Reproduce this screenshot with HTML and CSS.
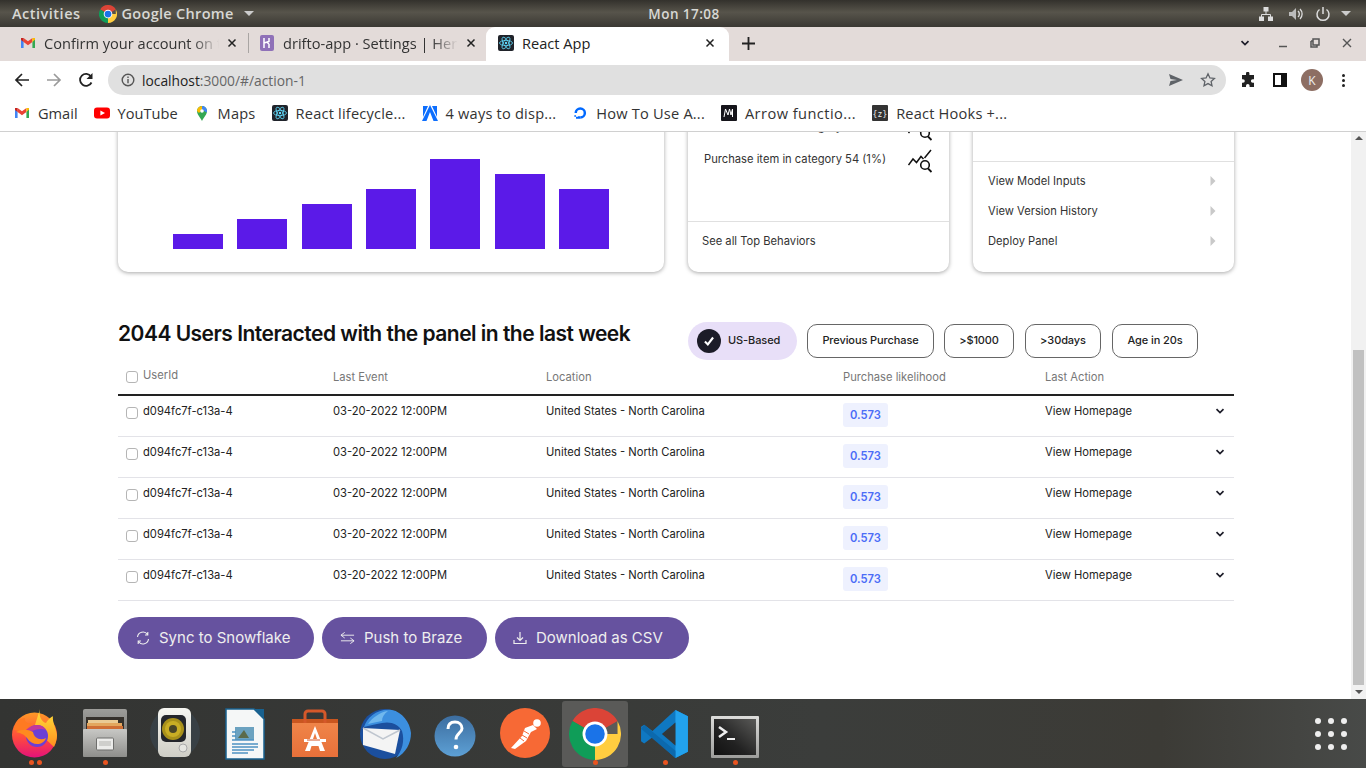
FILE: index.html
```html
<!DOCTYPE html>
<html lang="en">
<head>
<meta charset="utf-8">
<title>React App</title>
<link rel="stylesheet" href="styles.css">
</head>
<body>
<svg class="defs" width="0" height="0" aria-hidden="true">
  <defs>
    <symbol id="react" viewBox="0 0 16 16"><rect width="16" height="16" rx="2" fill="#20232a"/><g fill="none" stroke="#61dafb" stroke-width=".8"><ellipse cx="8" cy="8" rx="6.5" ry="2.6"/><ellipse cx="8" cy="8" rx="6.5" ry="2.6" transform="rotate(60 8 8)"/><ellipse cx="8" cy="8" rx="6.5" ry="2.6" transform="rotate(120 8 8)"/></g><circle cx="8" cy="8" r="1.2" fill="#61dafb"/></symbol>
    <symbol id="gmail" viewBox="0 0 16 16"><path d="M1 3v10h2.6V7z" fill="#4285f4"/><path d="M12.4 7v6H15V3z" fill="#34a853"/><path d="M3.6 3v4L8 10.2V6.2z" fill="#ea4335"/><path d="M12.4 3v4L8 10.2V6.2z" fill="#ea4335"/><path d="M12.4 3H15v1.5L12.4 7z" fill="#fbbc04"/><path d="M1 3h2.6v4L1 5z" fill="#c5221f"/></symbol>
    <symbol id="chrome" viewBox="0 0 48 48"><path d="M24 24L3.2 12A24 24 0 0 1 44.8 12z" fill="#db4437"/><path d="M24 24L3.2 12A24 24 0 0 0 24 48z" fill="#0f9d58"/><path d="M24 24H44.8V12A24 24 0 0 1 24 48z" fill="#ffcd40"/><circle cx="24" cy="24" r="11.5" fill="#fff"/><circle cx="24" cy="24" r="9" fill="#1a73e8"/></symbol>
    <symbol id="chev" viewBox="0 0 10 10"><path d="M1.5 3.2L5 6.6l3.5-3.4" fill="none" stroke="#1c1c28" stroke-width="1.7"/></symbol>
    <symbol id="tri" viewBox="0 0 6 12"><path d="M0.5 1l5 5-5 5z" fill="#c9c9c9"/></symbol>
    <symbol id="trend" viewBox="0 0 26 24"><path d="M0.5 16L5 10l3.500 3.500L13 7.500 15.500 10M16.500 9L23 1" fill="none" stroke="#111" stroke-width="1.500"/><circle cx="17" cy="16" r="4.300" fill="none" stroke="#111" stroke-width="1.600"/><path d="M20 19.500l3.500 3.500" stroke="#111" stroke-width="1.800"/></symbol>
    <symbol id="close" viewBox="0 0 10 10"><path d="M1.5 1.5l7 7M8.5 1.5l-7 7" stroke="#222" stroke-width="1.5"/></symbol>
  </defs>
</svg>

<header class="topbar">
  <div class="top-left">
    <span class="activities">Activities</span>
    <span class="top-app"><svg class="i18"><use href="#chrome"/></svg>Google Chrome<i class="caret"></i></span>
  </div>
  <div class="clock">Mon 17:08</div>
  <div class="top-right">
    <svg class="i16 net" viewBox="0 0 16 16"><path d="M5.500 1h5v4.500h-5zM1 10.500h5V15H1zM10 10.500h5V15h-5z" fill="#ddd"/><path d="M8 5v3.500M3.500 11V8.500h9V11" fill="none" stroke="#ddd"/></svg>
    <svg class="i16" viewBox="0 0 16 16"><path d="M1 6h3l4-4v12l-4-4H1z" fill="#bbb"/><path d="M10 5a4 4 0 0 1 0 6M12 3a7 7 0 0 1 0 10" fill="none" stroke="#ddd" stroke-width="1.3"/></svg>
    <svg class="i16" viewBox="0 0 16 16"><path d="M8 1v7M4.5 3.5a6 6 0 1 0 7 0" fill="none" stroke="#ddd" stroke-width="1.5"/></svg>
    <i class="caret"></i>
  </div>
</header>

<div class="tabstrip">
  <div class="tab tab-one"><svg class="i16"><use href="#gmail"/></svg><span class="tab-title">Confirm your account on t</span><svg class="i10"><use href="#close"/></svg></div>
  <div class="tab tab-two"><svg class="i16" viewBox="0 0 16 16"><rect x="1" width="14" height="16" rx="2" fill="#8f71b8"/><path d="M5 3v10M5 8l5-1.5V3M10 9v4M10 9L7.5 7" fill="none" stroke="#fff" stroke-width="1.5"/></svg><span class="tab-title">drifto-app · Settings | Hero</span><svg class="i10"><use href="#close"/></svg></div>
  <div class="tab tab-active"><svg class="i16"><use href="#react"/></svg><span class="tab-title">React App</span><svg class="i10"><use href="#close"/></svg></div>
  <svg class="new-tab" viewBox="0 0 12 12"><path d="M6 0v12M0 6h12" stroke="#222" stroke-width="1.7"/></svg>
  <div class="win-controls">
    <svg class="i10 wc-list"><use href="#chev"/></svg>
    <svg class="i10" viewBox="0 0 10 10"><path d="M1 8.5h8" stroke="#555" stroke-width="1.5"/></svg>
    <svg class="i10" viewBox="0 0 10 10"><path d="M3 1h6v6H3zM1 3h2M1 3v6h6V7" fill="none" stroke="#555" stroke-width="1.5"/></svg>
    <svg class="i10" viewBox="0 0 10 10"><path d="M1 1l8 8M9 1l-8 8" stroke="#555" stroke-width="1.4"/></svg>
  </div>
</div>

<nav class="toolbar">
  <svg class="i16 tool" viewBox="0 0 16 16"><path d="M15 8H2M8 2L2 8l6 6" fill="none" stroke="#222" stroke-width="1.7"/></svg>
  <svg class="i16 tool" viewBox="0 0 16 16"><path d="M1 8h13M8 2l6 6-6 6" fill="none" stroke="#9a9a9a" stroke-width="1.7"/></svg>
  <svg class="i16 tool" viewBox="0 0 16 16"><path d="M13.5 10.5A6 6 0 1 1 13 4.5" fill="none" stroke="#222" stroke-width="1.8"/><path d="M14.5 1v6h-6z" fill="#222"/></svg>
  <div class="omnibox">
    <svg class="i14" viewBox="0 0 14 14"><circle cx="7" cy="7" r="5.8" fill="none" stroke="#555" stroke-width="1.4"/><path d="M7 6v4.2M7 3.6v1.3" stroke="#555" stroke-width="1.4"/></svg>
    <span class="url"><b>localhost</b>:3000/#/action-1</span>
    <svg class="i16 send" viewBox="0 0 16 16"><path d="M1 2l14 6-14 6 1.5-5L9 8 2.5 7z" fill="#5f6368"/></svg>
    <svg class="i16" viewBox="0 0 16 16"><path d="M8 1.8l1.9 4.1 4.5.5-3.3 3 .9 4.4L8 11.6l-4 2.2.9-4.4-3.3-3 4.5-.5z" fill="none" stroke="#5f6368" stroke-width="1.3"/></svg>
  </div>
  <svg class="i16 ext" viewBox="0 0 16 16"><path d="M6 1.5a1.7 1.7 0 0 1 3.4 0V3H14v4.2h-1.3a1.8 1.8 0 0 0 0 3.6H14V15H9.6v-1.2a1.8 1.8 0 0 0-3.6 0V15H2v-4.2h1a1.8 1.8 0 0 0 0-3.6H2V3h4z" fill="#222"/></svg>
  <svg class="i16 side" viewBox="0 0 16 16"><path d="M2 2h12v12H2z" fill="none" stroke="#111" stroke-width="2"/><path d="M9 2h5v12H9z" fill="#111"/></svg>
  <span class="avatar">K</span>
  <span class="kebab"><i></i><i></i><i></i></span>
</nav>

<div class="bookmarks">
  <span class="bm bm-tight"><svg class="i16"><use href="#gmail"/></svg>Gmail</span>
  <span class="bm bm-tight"><svg class="i16" viewBox="0 0 16 16"><rect y="2.5" width="16" height="11" rx="3" fill="#f00"/><path d="M6.4 5.5v5L11 8z" fill="#fff"/></svg>YouTube</span>
  <span class="bm"><svg class="i16" viewBox="0 0 16 16"><path d="M8 16C6 12 3 9.5 3 6a5 5 0 0 1 10 0c0 3.500-3 6-5 10z" fill="#34a853"/><path d="M4.500 2.500A5 5 0 0 1 8 1v3.500L5 8 3 6a5 5 0 0 1 1.500-3.500z" fill="#fbbc04"/><path d="M8 1a5 5 0 0 1 5 5c0 .5 0 1-.3 1.500L8 4.500z" fill="#4285f4"/><circle cx="8" cy="6" r="1.800" fill="#fff"/></svg>Maps</span>
  <span class="bm"><svg class="i16"><use href="#react"/></svg>React lifecycle...</span>
  <span class="bm"><svg class="i16" viewBox="0 0 16 16"><path d="M8 0l8 16h-4.500L8 7 4.500 16H0z" fill="#0d6efd"/><path d="M0 0h6.500L0 14zM16 0H9.500L16 14z" fill="#fff"/><path d="M1 1h5L1 12zM15 1h-5l5 11z" fill="#0d6efd"/></svg>4 ways to disp...</span>
  <span class="bm"><svg class="i16" viewBox="0 0 16 16"><path d="M2.500 8a5.800 5.800 0 1 1 5.800 5.800V11.300A3.300 3.300 0 1 0 5 8z" fill="#0069ff"/><path d="M8.300 11.300v2.500H6v-2.500zM6 13.800H4v-2h2zM4 11.800H2.300v-1.500H4z" fill="#0069ff"/></svg>How To Use A...</span>
  <span class="bm bm-wide"><svg class="i16" viewBox="0 0 16 16"><rect width="16" height="16" rx="1" fill="#15141a"/><path d="M3 12l1.500-8L7 10l1.500-6L10 10l1.500-6v8" fill="none" stroke="#fff" stroke-width="1"/></svg>Arrow functio...</span>
  <span class="bm"><svg class="i16" viewBox="0 0 16 16"><rect width="16" height="16" rx="1" fill="#333"/><text x="8" y="11.500" class="zed">{z}</text></svg>React Hooks +...</span>
</div>

<div class="viewport">
  <main class="page">
    <section class="cards">
      <article class="card card-chart">
        <div class="bars">
          <div class="bar" style="height:15px"></div>
          <div class="bar" style="height:30px"></div>
          <div class="bar" style="height:45px"></div>
          <div class="bar" style="height:60px"></div>
          <div class="bar" style="height:90px"></div>
          <div class="bar" style="height:75px"></div>
          <div class="bar" style="height:60px"></div>
        </div>
      </article>
      <article class="card card-behaviors">
        <div class="behaviors">
          <div class="behavior"><span>Purchase item in category 12 (2%)</span><svg class="trend"><use href="#trend"/></svg></div>
          <div class="behavior"><span>Purchase item in category 54 (1%)</span><svg class="trend"><use href="#trend"/></svg></div>
        </div>
        <div class="see-all">See all Top Behaviors</div>
      </article>
      <article class="card card-links">
        <div class="links-top"></div>
        <ul class="links">
          <li>View Model Inputs<svg class="tri"><use href="#tri"/></svg></li>
          <li>View Version History<svg class="tri"><use href="#tri"/></svg></li>
          <li>Deploy Panel<svg class="tri"><use href="#tri"/></svg></li>
        </ul>
      </article>
    </section>

    <section class="heading-row">
      <h2>2044 Users Interacted with the panel in the last week</h2>
      <div class="filters">
        <span class="chip-on"><span class="tick"><svg viewBox="0 0 12 12"><path d="M2.500 6.500l2.500 2.500 4.500-6" fill="none" stroke="#fff" stroke-width="1.800"/></svg></span>US-Based</span>
        <span class="chip chip-a">Previous Purchase</span>
        <span class="chip chip-b">&gt;$1000</span>
        <span class="chip chip-c">&gt;30days</span>
        <span class="chip chip-d">Age in 20s</span>
      </div>
    </section>

    <section class="table">
      <div class="thead">
        <div class="th th-id"><i class="box"></i><span>UserId</span></div>
        <div class="th">Last Event</div>
        <div class="th">Location</div>
        <div class="th">Purchase likelihood</div>
        <div class="th">Last Action</div>
      </div>
      <div class="tr"><div class="td td-id"><i class="box"></i>d094fc7f-c13a-4</div><div class="td">03-20-2022 12:00PM</div><div class="td">United States - North Carolina</div><div class="td"><span class="score">0.573</span></div><div class="td td-action">View Homepage<svg class="i10"><use href="#chev"/></svg></div></div>
      <div class="tr"><div class="td td-id"><i class="box"></i>d094fc7f-c13a-4</div><div class="td">03-20-2022 12:00PM</div><div class="td">United States - North Carolina</div><div class="td"><span class="score">0.573</span></div><div class="td td-action">View Homepage<svg class="i10"><use href="#chev"/></svg></div></div>
      <div class="tr"><div class="td td-id"><i class="box"></i>d094fc7f-c13a-4</div><div class="td">03-20-2022 12:00PM</div><div class="td">United States - North Carolina</div><div class="td"><span class="score">0.573</span></div><div class="td td-action">View Homepage<svg class="i10"><use href="#chev"/></svg></div></div>
      <div class="tr"><div class="td td-id"><i class="box"></i>d094fc7f-c13a-4</div><div class="td">03-20-2022 12:00PM</div><div class="td">United States - North Carolina</div><div class="td"><span class="score">0.573</span></div><div class="td td-action">View Homepage<svg class="i10"><use href="#chev"/></svg></div></div>
      <div class="tr"><div class="td td-id"><i class="box"></i>d094fc7f-c13a-4</div><div class="td">03-20-2022 12:00PM</div><div class="td">United States - North Carolina</div><div class="td"><span class="score">0.573</span></div><div class="td td-action">View Homepage<svg class="i10"><use href="#chev"/></svg></div></div>
    </section>

    <section class="actions">
      <button class="btn btn-a"><svg class="i14" viewBox="0 0 14 14"><path d="M1.500 6A5.500 5.500 0 0 1 11.500 3.500M12.500 8A5.500 5.500 0 0 1 2.500 10.500M11.800 1v3H9M2.200 13v-3H5" fill="none" stroke="#eee" stroke-width="1.100"/></svg>Sync to Snowflake</button>
      <button class="btn btn-b"><svg class="i14 wide" viewBox="0 0 16 14"><path d="M1 4h14M5 1L1 4l4 3M15 10H1M11 7l4 3-4 3" fill="none" stroke="#eee" stroke-width="1"/></svg>Push to Braze</button>
      <button class="btn btn-c"><svg class="i14" viewBox="0 0 14 14"><path d="M7 1v8M4 6.500L7 9.500l3-3M1 9v3.500h12V9" fill="none" stroke="#eee" stroke-width="1.200"/></svg>Download as CSV</button>
    </section>
  </main>
  <aside class="scrollbar">
    <i class="arrow-up"></i>
    <div class="thumb"></div>
    <i class="arrow-down"></i>
  </aside>
</div>

<footer class="dock">
  <div class="app">
    <svg class="icon" viewBox="0 0 50 52">
      <defs>
        <linearGradient id="ff" x1="0" y1="0" x2="0" y2="1"><stop offset="0" stop-color="#ff9a26"/><stop offset=".55" stop-color="#ff4a3d"/><stop offset="1" stop-color="#e3127a"/></linearGradient>
        <linearGradient id="ffy" x1="0" y1="0" x2="0" y2="1"><stop offset="0" stop-color="#ffe23a"/><stop offset="1" stop-color="#ff8f1f"/></linearGradient>
      </defs>
      <circle cx="24.500" cy="27" r="22.500" fill="url(#ff)"/>
      <path d="M30 1c-2 7 2 13 6 14 3-5 6-6 7-7-1 6 3 12 4 19 0 4-1 8-3 12L24 20z" fill="url(#ffy)"/>
      <path d="M8 12c2-1 5-2 7-2-1 4 3 6 7 5l-8 9-10-2c0-4 2-7 4-10z" fill="#ff7a22"/>
      <circle cx="27" cy="28" r="11" fill="#6b3fd4"/>
      <path d="M27 17a11 11 0 0 1 9 5c-4-2-9-1-14 1l-6-1c3-3 7-5 11-5z" fill="#c2389c"/>
      <path d="M6 24c6-3 12-3 17 0 1 6 7 9 13 6-3 8-14 8-19 0-3-4-7-5-11-6z" fill="#ff8a1f"/>
    </svg>
    <div class="dots"><i></i><i></i></div>
  </div>
  <div class="app">
    <svg class="icon" viewBox="0 0 50 52">
      <defs>
        <linearGradient id="cab" x1="0" y1="0" x2="0" y2="1"><stop offset="0" stop-color="#c8c8c5"/><stop offset="1" stop-color="#8e8e8b"/></linearGradient>
        <linearGradient id="cabt" x1="0" y1="0" x2="0" y2="1"><stop offset="0" stop-color="#9d9d9a"/><stop offset="1" stop-color="#5e5e5b"/></linearGradient>
      </defs>
      <rect x="3" y="1" width="44" height="48" rx="2" fill="url(#cabt)"/>
      <rect x="6" y="9" width="38" height="13" fill="#35312c"/>
      <path d="M8 12h30v3H8z" fill="#eacb94"/><path d="M7 15h35v3H7z" fill="#e3a75e"/><path d="M7 18h36v3H7z" fill="#cf6f35"/>
      <rect x="3" y="21" width="44" height="28" rx="1" fill="url(#cab)"/>
      <rect x="16.500" y="30" width="17" height="12" rx="1" fill="#ececea" stroke="#6f6f6d"/>
      <rect x="19" y="33" width="12" height="5" fill="#cfcfcc"/>
    </svg>
    <div class="dots"><i></i></div>
  </div>
  <div class="app">
    <svg class="icon" viewBox="0 0 50 52">
      <defs><linearGradient id="spk" x1="0" y1="0" x2="0" y2="1"><stop offset="0" stop-color="#f6f6f1"/><stop offset="1" stop-color="#cfcec6"/></linearGradient></defs>
      <circle cx="25" cy="25" r="25" fill="#3f5468" opacity=".35"/>
      <rect x="8" y="0" width="33" height="49" rx="6" fill="url(#spk)"/>
      <rect x="11" y="7" width="25" height="27" rx="5" fill="#24262b"/>
      <circle cx="23" cy="21" r="11" fill="#a8901a"/><circle cx="23" cy="21" r="8" fill="#c9ad24"/><circle cx="23" cy="21" r="4" fill="#4a4526"/>
      <circle cx="33" cy="40" r="4" fill="#e6e6e1" stroke="#aaa"/>
    </svg>
    <div class="dots dots-empty"></div>
  </div>
  <div class="app">
    <svg class="icon" viewBox="0 0 48 52"><path d="M5 1h28l10 10v40H5z" fill="#f5f7f7" stroke="#18618f" stroke-width="1.500"/><path d="M33 1h10v10z" fill="#18618f"/><rect x="14" y="19" width="19" height="13" fill="#6ba2c0"/><path d="M17 30l6-8 5 8z" fill="#5b6b4b"/><path d="M11 24h4M11 28h4M11 32h22M11 36h26M11 39h26M11 42h22M11 45h16" stroke="#4e93c2" stroke-width="1.500"/></svg>
    <div class="dots dots-empty"></div>
  </div>
  <div class="app">
    <svg class="icon" viewBox="0 0 50 52">
      <defs><linearGradient id="bag" x1="0" y1="0" x2="0" y2="1"><stop offset="0" stop-color="#f0874a"/><stop offset="1" stop-color="#e8703a"/></linearGradient></defs>
      <path d="M2 11h46v38H2z" fill="url(#bag)"/><path d="M2 11h46v4H2z" fill="#c9561f"/>
      <path d="M15 15V6a3 3 0 0 1 3-3h14a3 3 0 0 1 3 3v9" fill="none" stroke="#d4582a" stroke-width="3"/>
      <path d="M25 18L15 43h5l1.500-5h7l1.500 5h5zM23 31l2-6 2 6z" fill="#fff"/>
      <path d="M14 31h22v3H14z" fill="#fff"/><path d="M17 32h13" stroke="#d4582a"/>
    </svg>
    <div class="dots dots-empty"></div>
  </div>
  <div class="app">
    <svg class="icon-tb" viewBox="0 0 54 52">
      <circle cx="27" cy="26" r="25" fill="#1b4f9e"/>
      <path d="M6 19C9 9 20 0 34 2c10 2 18 12 19 23 0 10-5 20-15 25 6-7 9-17 6-27-3-7-12-10-20-8-7 1-13 3-18 4z" fill="#3c8fdf"/>
      <path d="M10 16c4-6 12-12 20-13-4 3-6 6-6 10-5 1-10 2-14 3z" fill="#70b8ee"/>
      <path d="M5 20l37 2-5 24-32-9z" fill="#f4f4f4"/>
      <path d="M5 20l20 11 17-9" fill="none" stroke="#bfc6cf" stroke-width="1.500"/>
    </svg>
    <div class="dots dots-empty"></div>
  </div>
  <div class="app">
    <svg class="icon-help" viewBox="0 0 42 42"><defs><linearGradient id="hp" x1="0" y1="0" x2="0" y2="1"><stop offset="0" stop-color="#3c6d9f"/><stop offset="1" stop-color="#5da0d5"/></linearGradient></defs><circle cx="21" cy="21" r="20.500" fill="url(#hp)"/><path d="M14 14c0-5 3-7 7-7s7 2.500 7 6.500-6 5-6 11" fill="none" stroke="#fff" stroke-width="3"/><circle cx="22" cy="32" r="2.300" fill="#fff"/></svg>
    <div class="dots dots-empty"></div>
  </div>
  <div class="app">
    <svg class="icon-postman" viewBox="0 0 50 50"><circle cx="25" cy="25" r="25" fill="#f76935"/><circle cx="37" cy="15" r="3.800" fill="#fff"/><path d="M33 17l-8 3-3 8-11 12 4 1 11-8 5-9 6-3z" fill="#fff"/><path d="M24 23l5 3M22 27l5 3M20 30l4 3" stroke="#f76935" stroke-width="1"/></svg>
    <div class="dots dots-empty"></div>
  </div>
  <div class="app app-current">
    <svg class="icon-chrome"><use href="#chrome"/></svg>
    <div class="dots"><i></i></div>
  </div>
  <div class="app">
    <svg class="icon" viewBox="0 0 48 48"><path d="M34 1l12 6v34l-12 6-22-20-8 6-3-2V17l3-2 8 6z" fill="#0f78c2"/><path d="M34 1l12 6v34l-12 6z" fill="#22a2ee"/><path d="M34 13L21 24l13 11z" fill="#33373a"/><path d="M4 15l30 25v7L1 19z" fill="#0c69ad"/></svg>
    <div class="dots"><i></i></div>
  </div>
  <div class="app">
    <svg class="icon-term" viewBox="0 0 48 42">
      <defs>
        <linearGradient id="tf" x1="0" y1="0" x2="0" y2="1"><stop offset="0" stop-color="#dcdcda"/><stop offset="1" stop-color="#9d9d9b"/></linearGradient>
        <linearGradient id="tb" x1="1" y1="0" x2="0" y2="1"><stop offset="0" stop-color="#5a5a58"/><stop offset=".6" stop-color="#222"/><stop offset="1" stop-color="#111"/></linearGradient>
      </defs>
      <rect x="0" y="0" width="48" height="42" rx="1" fill="url(#tf)"/><rect x="3" y="3" width="42" height="36" fill="url(#tb)"/>
      <path d="M8 11l7 5-7 5" fill="none" stroke="#eee" stroke-width="2.500"/><path d="M16 23h8" stroke="#eee" stroke-width="2"/>
    </svg>
    <div class="dots"><i></i></div>
  </div>
  <div class="grid-dots"><i></i><i></i><i></i><i></i><i></i><i></i><i></i><i></i><i></i></div>
</footer>
</body>
</html>
```

FILE: styles.css
```css
* { box-sizing: border-box; }
html, body { margin: 0; padding: 0; }
body {
  width: 1366px; height: 768px; overflow: hidden;
  display: flex; flex-direction: column;
  font-family: "Open Sans", "Noto Sans", sans-serif;
  background: #fff;
}
i { font-style: normal; display: block; }
svg { display: block; flex: none; }
.defs { position: absolute; }
.i10 { width: 10px; height: 10px; }
.i14 { width: 14px; height: 14px; }
.i16 { width: 16px; height: 16px; }
.i18 { width: 18px; height: 18px; }

/* GNOME top bar */
.topbar {
  height: 27px; flex: none;
  display: grid; grid-template-columns: 1fr auto 1fr; align-items: center;
  padding: 0 12px;
  background: linear-gradient(#33312c, #57544b 45%, #3a3833);
  color: #d8d8d4; font-size: 14.5px; font-weight: 600; letter-spacing: .3px;
}
.top-left { display: flex; align-items: center; gap: 18px; }
.activities { letter-spacing: .5px; }
.top-app { display: flex; align-items: center; gap: 5px; }
.caret { width: 0; height: 0; border: 5px solid transparent; border-top: 5px solid #ccc; border-bottom: 0; margin-left: 5px; }
.clock { font-size: 13.5px; letter-spacing: .45px; padding-left: 2px; }
.top-right { display: flex; align-items: center; justify-content: flex-end; gap: 11px; padding-right: 3px; }
.top-right .caret { margin-left: -1px; }
.net { margin-right: 3px; }

/* tabs */
.tabstrip {
  height: 34px; flex: none;
  display: flex; align-items: center;
  background: #e3dbd9; color: #333; font-size: 14.6px;
}
.tab { height: 34px; display: flex; align-items: center; gap: 8px; padding-bottom: 2px; }
.tab-title { flex: 1; overflow: hidden; white-space: nowrap; }
.tab-one .tab-title, .tab-two .tab-title {
  -webkit-mask-image: linear-gradient(90deg, #000 85%, transparent);
  mask-image: linear-gradient(90deg, #000 85%, transparent);
}
.tab-one { width: 248px; padding: 0 11px 2px 20px; }
.tab-two { width: 238px; padding: 0 10px 0 10px; border-left: 1px solid #a9a5a3; height: 20px; margin-bottom: 2px; }
.tab-active { width: 243px; padding: 0 14px 2px 12px; background: #fff; border-radius: 9px 9px 0 0; color: #222; }
.new-tab { width: 13px; height: 13px; margin-left: 13px; margin-bottom: 2px; }
.win-controls { margin-left: auto; display: flex; align-items: center; gap: 22px; padding-right: 14px; padding-bottom: 2px; }
.wc-list { margin-right: 6px; }

/* toolbar */
.toolbar {
  height: 36px; flex: none;
  display: flex; align-items: center; padding: 2px 0 0 14px;
  background: #fff;
}
.tool { margin-right: 16px; }
.omnibox {
  width: 1118px; height: 30px; margin: 0 0 0 -2px; padding: 0 10px 0 13px;
  display: flex; align-items: center;
  background: #e0e0e0; border-radius: 15px;
}
.url { margin-left: 7px; font-size: 13.8px; color: #666; flex: 1; }
.url b { font-weight: 400; color: #222; }
.send { margin-right: 16px; }
.ext { margin-left: 14px; }
.side { margin-left: 16px; }
.avatar {
  width: 22px; height: 22px; margin-left: 13px; border-radius: 50%;
  background: #8d6e63; color: #eee; font-size: 12px;
  display: flex; align-items: center; justify-content: center;
}
.kebab { margin-left: 19px; display: flex; flex-direction: column; gap: 2px; }
.kebab i { width: 3px; height: 3px; border-radius: 50%; background: #222; }

/* bookmarks */
.bookmarks {
  height: 35px; flex: none;
  display: flex; align-items: center; gap: 16px; padding: 0 0 2px 14px;
  background: #fff; border-bottom: 1px solid #d0d0d0;
  color: #333; font-size: 14.6px; letter-spacing: .2px;
}
.bm { display: flex; align-items: center; gap: 8px; white-space: nowrap; }
.bm-tight { letter-spacing: 0; }
.bm-wide { letter-spacing: .45px; }
.zed { font: 8px "DejaVu Sans Mono", monospace; fill: #eee; text-anchor: middle; }

/* page */
.viewport { flex: 1; min-height: 0; display: flex; overflow: hidden; }
.page {
  flex: 1; min-width: 0; padding: 0 117px 0 118px; margin-top: -30px;
  font-family: Inter, "Liberation Sans", sans-serif;
  color: #222;
}
.cards { display: flex; gap: 24px; height: 170px; }
.card {
  background: #fff; border-radius: 0 0 10px 10px;
  box-shadow: 0 1px 4px rgba(0,0,0,.35);
  overflow: hidden;
}
.card-chart { width: 546px; display: flex; flex-direction: column; justify-content: flex-end; padding: 0 55px 23px; }
.bars { display: flex; align-items: flex-end; justify-content: space-between; }
.bar { width: 50px; background: #5b1ae8; }
.card-behaviors, .card-links { width: 261px; font-size: 11.2px; color: #333; display: flex; flex-direction: column; }
.behaviors { height: 120px; flex: none; padding: 0 15px 0 16px; display: flex; flex-direction: column; gap: 8px; border-bottom: 1px solid #e0e0e0; }
.behavior { display: flex; align-items: center; justify-content: space-between; height: 24px; flex: none; }
.behavior:first-child { margin-top: 13px; }
.trend { width: 26px; height: 24px; margin-top: 4px; }
.see-all { padding: 12px 14px; }
.links-top { height: 60px; border-bottom: 1px solid #e0e0e0; flex: none; }
.links { list-style: none; margin: 0; padding: 4px 18px 0 15px; }
.links li { height: 30px; display: flex; align-items: center; justify-content: space-between; }
.tri { width: 6px; height: 12px; }

.heading-row { display: flex; height: 38px; margin-top: 50px; }
h2 { width: 570px; margin: 0; font-size: 21px; line-height: 24px; font-weight: 600; letter-spacing: -0.51px; color: #111; white-space: nowrap; }
.filters { display: flex; align-items: center; font-size: 11px; color: #222; font-weight: 500; letter-spacing: -.1px; }
.chip-on {
  width: 109px; height: 38px; border-radius: 19px; background: #e8dff8;
  display: flex; align-items: center; gap: 7px; padding: 0 0 2px 9px;
}
.tick { width: 24px; height: 24px; border-radius: 50%; background: #1c1c28; display: flex; align-items: center; justify-content: center; margin-bottom: -2px; }
.tick svg { width: 14px; height: 14px; }
.chip { height: 34px; border: 1px solid #666; border-radius: 10px; display: flex; align-items: center; justify-content: center; padding-bottom: 2px; }
.chip-a { width: 127px; margin-left: 10px; }
.chip-b { width: 70px; margin-left: 10px; }
.chip-c { width: 76px; margin-left: 11px; }
.chip-d { width: 86px; margin-left: 11px; }

.table { font-size: 11.2px; }
.thead, .tr { display: grid; grid-template-columns: 215px 213px 297px 202px 189px; }
.thead { height: 36px; padding-top: 9px; border-bottom: 2px solid #222; color: #777; }
.tr { height: 41px; padding-top: 7px; border-bottom: 1px solid #e3e3e8; color: #222; }
.th { line-height: 16px; }
.th-id, .td-id { display: flex; padding-left: 8px; gap: 5px; }
.th-id span { margin-top: -2px; }
.td { line-height: 16px; }
.box { width: 12px; height: 12px; margin-top: 4px; border: 1px solid #b5b5b5; border-radius: 3px; background: #fff; flex: none; }
.th-id .box { margin-top: 2px; }
.score {
  display: flex; align-items: center; justify-content: center;
  width: 45px; height: 24px; margin-top: 0; border-radius: 3px;
  background: #eef1fe; color: #4a6cf7; font-weight: 600;
}
.td-action { display: flex; justify-content: space-between; align-items: flex-start; padding-right: 9px; }
.td-action svg { margin-top: 3px; }

.actions { display: flex; gap: 8px; margin-top: 16px; }
.btn {
  height: 42px; border: 0; border-radius: 21px; background: #66529f; color: #eee;
  font: 400 15px Inter, "Liberation Sans", sans-serif;
  display: flex; align-items: center; justify-content: flex-start; gap: 9px; padding: 0 0 1px 18px;
}
.wide { width: 15px; }
.btn-a { width: 196px; }
.btn-b { width: 165px; }
.btn-c { width: 194px; }

.scrollbar { width: 15px; flex: none; background: #f1f1f1; display: flex; flex-direction: column; align-items: center; padding-top: 4px; }
.arrow-up, .arrow-down { width: 0; height: 0; border: 4px solid transparent; flex: none; }
.arrow-up { border-top: 0; border-bottom: 4px solid #555; }
.arrow-down { border-bottom: 0; border-top: 4px solid #555; margin-top: 5px; }
.thumb { width: 11px; height: 335px; margin-top: 210px; background: #c1c1c1; }

/* dock */
.dock {
  height: 69px; flex: none;
  display: flex; align-items: flex-start;
  background: linear-gradient(90deg, #333432 0%, #3b3d3b 60%, #3c3b36 85%, #484a48 100%);
}
.app { width: 70px; height: 69px; display: flex; flex-direction: column; align-items: center; padding-top: 9px; }
.icon { width: 50px; height: 52px; }
.icon-tb { width: 54px; height: 52px; }
.icon-help { width: 42px; height: 42px; margin: 7px 0 3px; }
.icon-postman { width: 50px; height: 50px; margin-bottom: 2px; }
.icon-term { width: 48px; height: 42px; margin: 8px 0 2px; }
.icon-chrome { width: 52px; height: 52px; }
.app-current { background: #5a5a58; border-radius: 3px; width: 66px; margin: 2px 2px 0; height: 66px; padding-top: 7px; }
.dots { display: flex; gap: 3px; justify-content: center; height: 5px; margin-top: 0; }
.dots i { width: 5px; height: 5px; border-radius: 50%; background: #e95420; }
.grid-dots {
  margin-left: auto; margin-top: 19px; margin-right: 19px;
  display: grid; grid-template-columns: repeat(3, 6px); gap: 7px 7px;
}
.grid-dots i { width: 6px; height: 6px; border-radius: 50%; background: #eee; }
```
